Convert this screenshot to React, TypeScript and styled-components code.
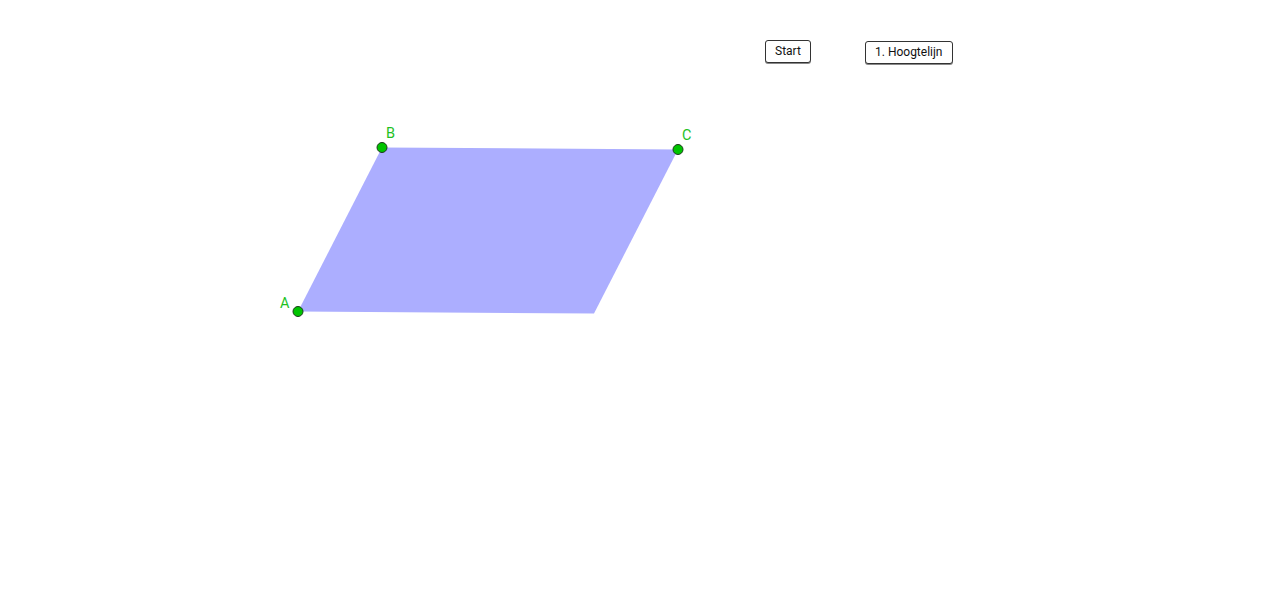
import React from 'react';
import styled, {createGlobalStyle} from 'styled-components';

const GlobalStyle = createGlobalStyle`
  html, body
  {
    margin: 0;
    padding: 0;
    background: #ffffff;
  }
  body
  {
    font-family: Roboto, "Liberation Sans", sans-serif;
  }
`

type Pt = {x: number; y: number; label: string; lx: number; ly: number};

const points: Pt[] = [
  {x: 298, y: 311.5, label: 'A', lx: 280, ly: 308},
  {x: 382, y: 147.5, label: 'B', lx: 386, ly: 138},
  {x: 678, y: 149.5, label: 'C', lx: 682, ly: 140},
];

const D = {x: 594, y: 313.5};

const buttons = [
  {label: 'Start', x: 765, y: 40},
  {label: '1. Hoogtelijn', x: 865, y: 41},
];

const App: React.FC = () =>
{
  const poly = `${points[0].x},${points[0].y} ${points[1].x},${points[1].y} ${points[2].x},${points[2].y} ${D.x},${D.y}`;

  return (
    <>
      <GlobalStyle />
      <Canvas>
        <Drawing width="1280" height="600" viewBox="0 0 1280 600">
          <polygon points={poly} fill="#acaeff" />
          {points.map(p => (
            <g key={p.label}>
              <circle cx={p.x} cy={p.y} r="5" fill="#00c400" stroke="#1a3a1a" strokeWidth="1" />
              <PointLabel x={p.lx} y={p.ly}>{p.label}</PointLabel>
            </g>
          ))}
        </Drawing>
        {buttons.map(b => (
          <ToolButton key={b.label} style={{left: b.x, top: b.y}}>{b.label}</ToolButton>
        ))}
      </Canvas>
    </>
  );
}

const Canvas = styled.div`
  position: relative;
  width: 1280px;
  height: 600px;
  overflow: hidden;
  background: #ffffff;
`

const Drawing = styled.svg`
  display: block;
`

const PointLabel = styled.text`
  font-family: Roboto, "Liberation Sans", sans-serif;
  font-size: 14.5px;
  fill: #1fc11f;
`

const ToolButton = styled.button`
  position: absolute;
  box-sizing: border-box;
  height: 23px;
  padding: 0 9px;
  background: #ffffff;
  border: 1px solid #333333;
  border-radius: 3px;
  box-shadow: 0 1px 0 #888888;
  font-family: Roboto, "Liberation Sans", sans-serif;
  font-size: 12px;
  color: #111111;
  line-height: 21px;
  cursor: pointer;
`

export default App
